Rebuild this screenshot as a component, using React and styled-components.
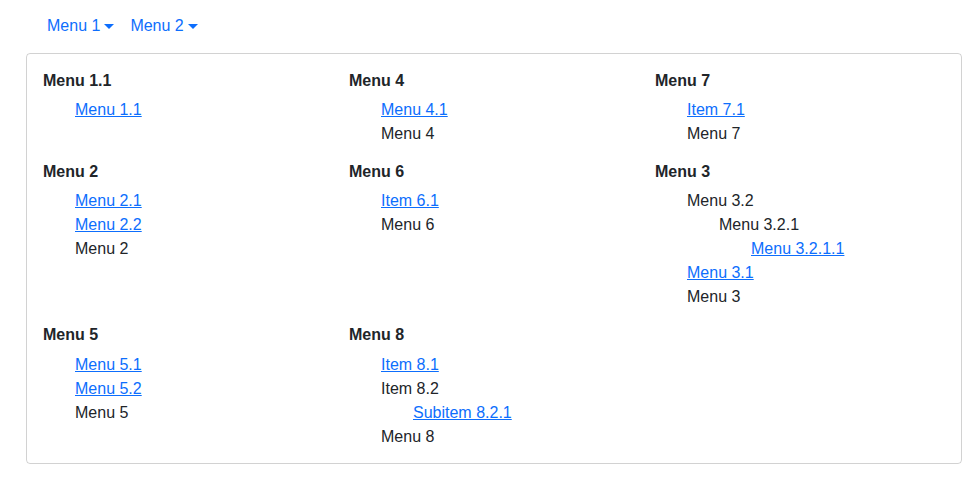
import React from 'react';
import styled, { createGlobalStyle } from 'styled-components';

const GlobalStyle = createGlobalStyle`
  body {
    margin: 0;
    background: #fff;
    font-family: "Liberation Sans", Arial, sans-serif;
    font-size: 16px;
    line-height: 1.5;
    color: #212529;
  }
`;

const menus = [
  { title: 'Menu 1.1', items: [{ label: 'Menu 1.1', link: true }] },
  { title: 'Menu 4', items: [{ label: 'Menu 4.1', link: true }, { label: 'Menu 4' }] },
  { title: 'Menu 7', items: [{ label: 'Item 7.1', link: true }, { label: 'Menu 7' }] },
  {
    title: 'Menu 2',
    items: [
      { label: 'Menu 2.1', link: true },
      { label: 'Menu 2.2', link: true },
      { label: 'Menu 2' },
    ],
  },
  { title: 'Menu 6', items: [{ label: 'Item 6.1', link: true }, { label: 'Menu 6' }] },
  {
    title: 'Menu 3',
    items: [
      {
        label: 'Menu 3.2',
        children: [
          { label: 'Menu 3.2.1', children: [{ label: 'Menu 3.2.1.1', link: true }] },
        ],
      },
      { label: 'Menu 3.1', link: true },
      { label: 'Menu 3' },
    ],
  },
  {
    title: 'Menu 5',
    items: [
      { label: 'Menu 5.1', link: true },
      { label: 'Menu 5.2', link: true },
      { label: 'Menu 5' },
    ],
  },
  {
    title: 'Menu 8',
    items: [
      { label: 'Item 8.1', link: true },
      { label: 'Item 8.2', children: [{ label: 'Subitem 8.2.1', link: true }] },
      { label: 'Menu 8' },
    ],
  },
];

function ItemList({ items }) {
  return (
    <List>
      {items.map((item) => (
        <li key={item.label}>
          {item.link ? <ItemLink href="#">{item.label}</ItemLink> : <span>{item.label}</span>}
          {item.children && <ItemList items={item.children} />}
        </li>
      ))}
    </List>
  );
}

export default function App() {
  return (
    <Page>
      <GlobalStyle />
      <Nav>
        <NavLink href="#">Menu 1</NavLink>
        <NavLink href="#">Menu 2</NavLink>
      </Nav>
      <Card>
        <MenuGrid>
          {menus.map((menu) => (
            <div key={menu.title}>
              <GroupTitle>{menu.title}</GroupTitle>
              <ItemList items={menu.items} />
            </div>
          ))}
        </MenuGrid>
      </Card>
    </Page>
  );
}

const Page = styled.div`
  padding: 6px 18px 0 26px;
`;

const Nav = styled.nav`
  display: flex;
  padding-left: 5px;
  margin-bottom: 7px;
`;

const NavLink = styled.a`
  display: flex;
  align-items: center;
  padding: 8px 16px;
  color: #0d6efd;
  text-decoration: none;
  line-height: 24px;

  &::after {
    content: '';
    display: inline-block;
    margin-left: 4px;
    border-top: 5px solid currentColor;
    border-left: 5px solid transparent;
    border-right: 5px solid transparent;
  }

  & + & {
    margin-left: -16px;
  }
`;

const Card = styled.div`
  border: 1px solid rgba(0, 0, 0, 0.175);
  border-radius: 4px;
  padding: 17px 16px 14px 16px;
`;

const MenuGrid = styled.div`
  display: grid;
  grid-template-columns: 306px 306px 1fr;
  row-gap: 16px;
`;

const GroupTitle = styled.h6`
  margin: 0 0 8px 0;
  font-size: 16px;
  font-weight: 700;
  line-height: 1.2;
`;

const List = styled.ul`
  list-style: none;
  margin: 0;
  padding-left: 32px;
  line-height: 24px;
`;

const ItemLink = styled.a`
  color: #0d6efd;
  text-decoration: underline;
`;
